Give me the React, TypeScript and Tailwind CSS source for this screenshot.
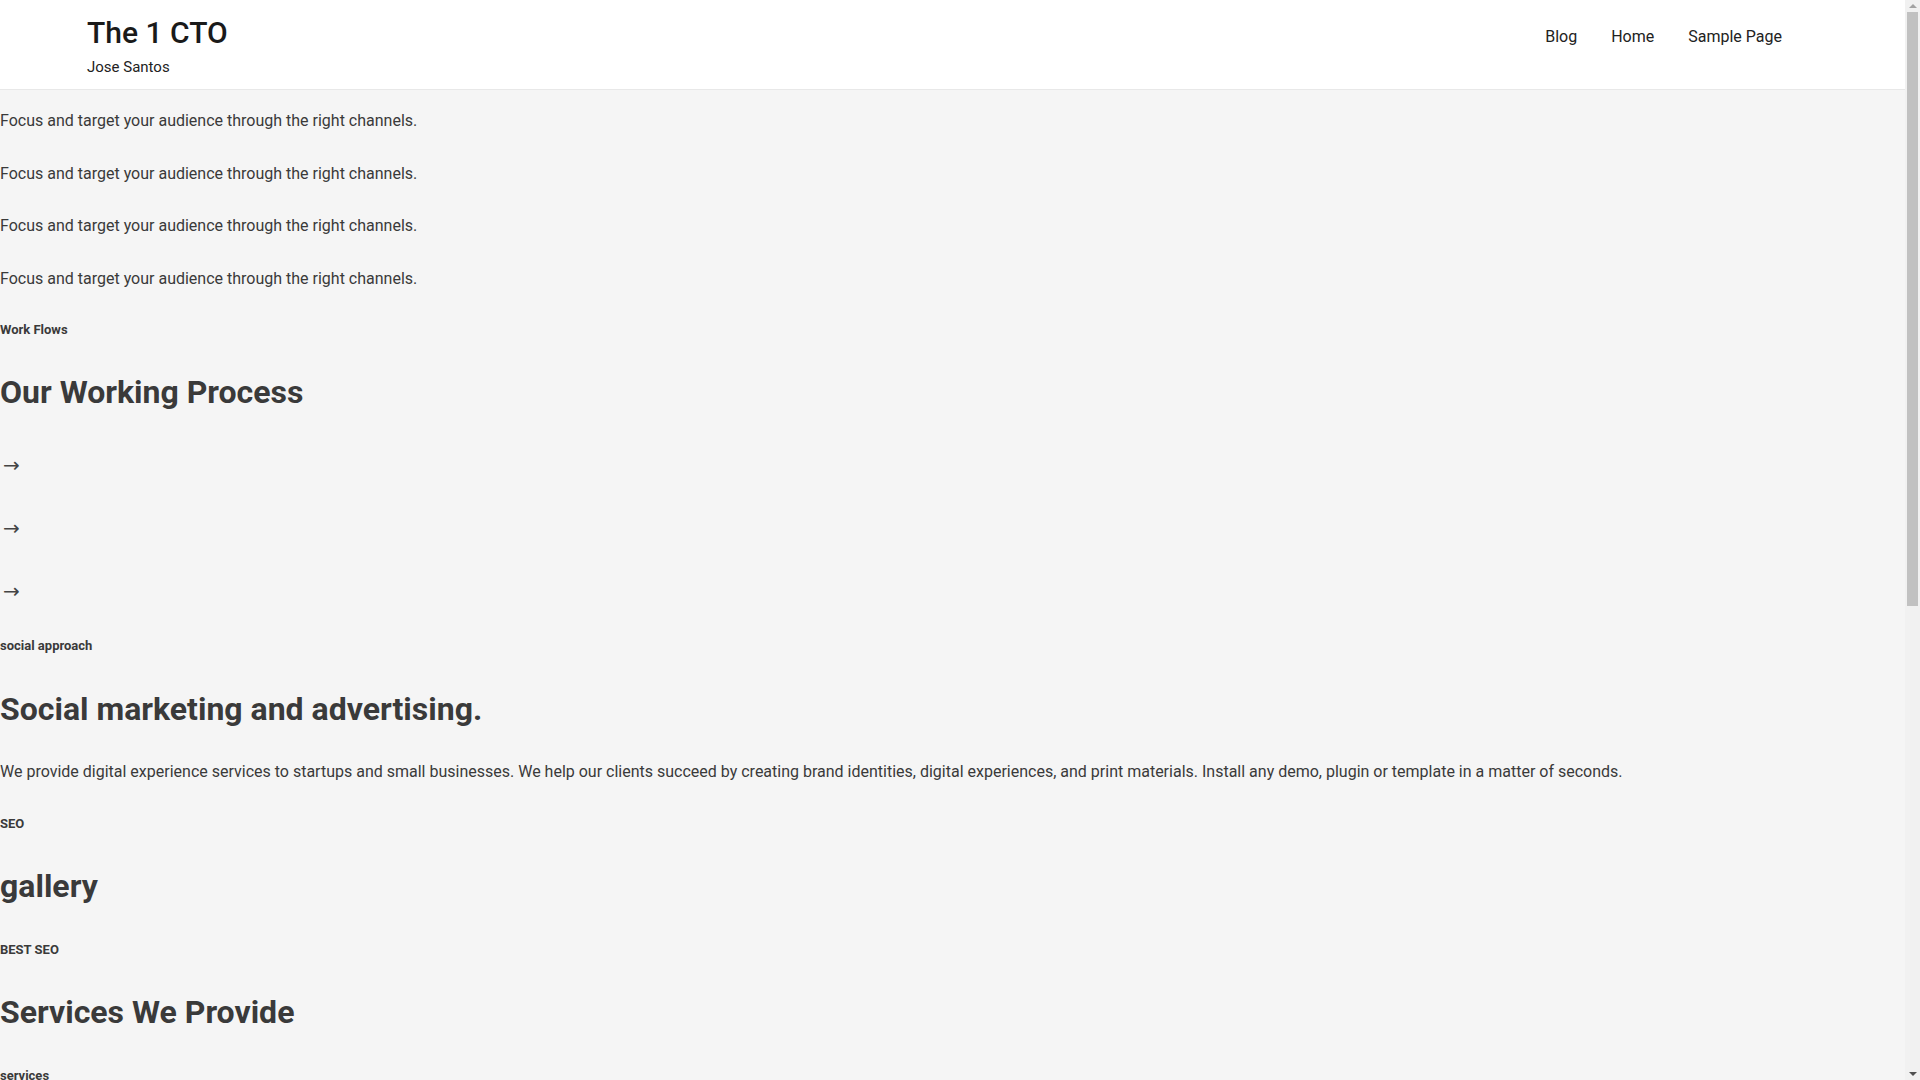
import React from "react";

const font = { fontFamily: "Roboto, 'Noto Sans', 'Liberation Sans', sans-serif" };

function Label({ children, className = "" }: { children: React.ReactNode; className?: string }) {
  return <div className={`text-[13px] font-bold leading-[20px] text-[#3a3a3a] ${className}`}>{children}</div>;
}

function H2({ children, className = "" }: { children: React.ReactNode; className?: string }) {
  return <h2 className={`text-[32px] font-bold leading-[38.4px] text-[#3a3a3a] ${className}`}>{children}</h2>;
}

function P({ children, className = "" }: { children: React.ReactNode; className?: string }) {
  return <p className={`text-[16px] leading-[28.5px] text-[#3a3a3a] ${className}`}>{children}</p>;
}

function Arrow() {
  return (
    <div className="flex h-[63px] items-center pl-[3px] text-[20px] text-[#444] [font-family:'DejaVu_Sans',sans-serif]">
      →
    </div>
  );
}

function Scrollbar() {
  return (
    <div className="flex h-[1080px] w-[15px] shrink-0 flex-col bg-[#f1f1f1]">
      <div className="flex h-[12px] items-center justify-center">
        <svg width="8" height="4" viewBox="0 0 8 4">
          <path d="M0 4 L4 0 L8 4 Z" fill="#a3a3a3" />
        </svg>
      </div>
      <div className="mx-[2px] h-[594px] bg-[#c1c1c1]" />
      <div className="flex-1" />
      <div className="flex h-[12px] items-center justify-center">
        <svg width="8" height="4" viewBox="0 0 8 4">
          <path d="M0 0 L8 0 L4 4 Z" fill="#505050" />
        </svg>
      </div>
    </div>
  );
}

export default function App() {
  return (
    <div className="flex h-[1080px] overflow-hidden bg-[#f5f5f5]" style={font}>
      <div className="min-w-0 flex-1">
        <header className="flex h-[90px] items-start justify-between border-b border-[#e8e8e8] bg-white pl-[87px] pr-[106px]">
          <div className="pt-[15px]">
            <div className="text-[30px] font-medium leading-[36px] text-[#1a1a1a]">The 1 CTO</div>
            <div className="mt-[4.5px] text-[15px] leading-[22.5px] text-[#222]">Jose Santos</div>
          </div>
          <nav className="flex pt-[25px] text-[16px] leading-[24px] text-[#222]">
            <a className="px-[17px]">Blog</a>
            <a className="px-[17px]">Home</a>
            <a className="px-[17px]">Sample Page</a>
          </nav>
        </header>

        <main className="pt-[17px]">
          <P className="mb-[24px]">Focus and target your audience through the right channels.</P>
          <P className="mb-[24px]">Focus and target your audience through the right channels.</P>
          <P className="mb-[24px]">Focus and target your audience through the right channels.</P>
          <P className="mb-[27px]">Focus and target your audience through the right channels.</P>

          <Label className="mb-[33px]">Work Flows</Label>
          <H2 className="mb-[22px]">Our Working Process</H2>

          <Arrow />
          <Arrow />
          <Arrow />

          <Label className="mt-[13.5px] mb-[34px]">social approach</Label>
          <H2 className="mb-[30px]">Social marketing and advertising.</H2>
          <P className="mb-[27px]">
            We provide digital experience services to startups and small businesses. We help our clients succeed by creating brand identities, digital experiences, and print materials. Install any demo, plugin or template in a matter of seconds.
          </P>

          <Label className="mb-[33px]">SEO</Label>
          <H2 className="mb-[35px]">gallery</H2>

          <Label className="mb-[33px]">BEST SEO</Label>
          <H2 className="mb-[34px]">Services We Provide</H2>

          <Label>services</Label>
        </main>
      </div>
      <Scrollbar />
    </div>
  );
}
